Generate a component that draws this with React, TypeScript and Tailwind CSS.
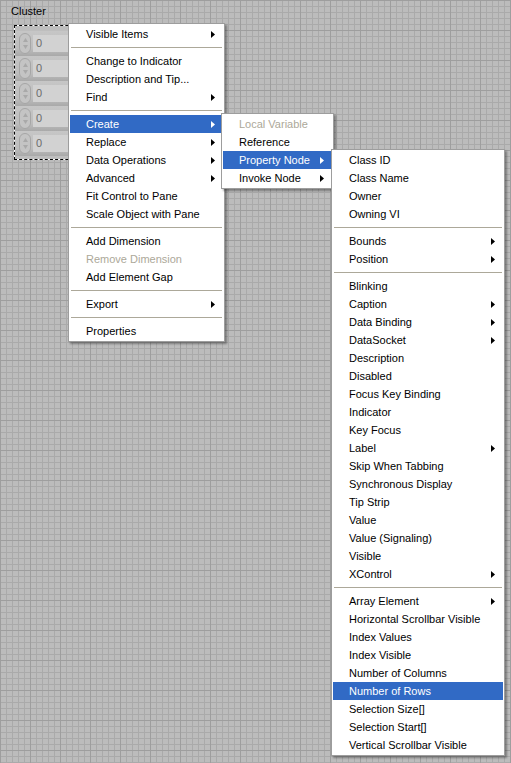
import React from 'react';

type Item = { label: string; sub?: boolean; disabled?: boolean; active?: boolean } | 'sep';

const mainMenu: Item[] = [
  { label: 'Visible Items', sub: true },
  'sep',
  { label: 'Change to Indicator' },
  { label: 'Description and Tip...' },
  { label: 'Find', sub: true },
  'sep',
  { label: 'Create', sub: true, active: true },
  { label: 'Replace', sub: true },
  { label: 'Data Operations', sub: true },
  { label: 'Advanced', sub: true },
  { label: 'Fit Control to Pane' },
  { label: 'Scale Object with Pane' },
  'sep',
  { label: 'Add Dimension' },
  { label: 'Remove Dimension', disabled: true },
  { label: 'Add Element Gap' },
  'sep',
  { label: 'Export', sub: true },
  'sep',
  { label: 'Properties' },
];

const createMenu: Item[] = [
  { label: 'Local Variable', disabled: true },
  { label: 'Reference' },
  { label: 'Property Node', sub: true, active: true },
  { label: 'Invoke Node', sub: true },
];

const propertyMenu: Item[] = [
  { label: 'Class ID' },
  { label: 'Class Name' },
  { label: 'Owner' },
  { label: 'Owning VI' },
  'sep',
  { label: 'Bounds', sub: true },
  { label: 'Position', sub: true },
  'sep',
  { label: 'Blinking' },
  { label: 'Caption', sub: true },
  { label: 'Data Binding', sub: true },
  { label: 'DataSocket', sub: true },
  { label: 'Description' },
  { label: 'Disabled' },
  { label: 'Focus Key Binding' },
  { label: 'Indicator' },
  { label: 'Key Focus' },
  { label: 'Label', sub: true },
  { label: 'Skip When Tabbing' },
  { label: 'Synchronous Display' },
  { label: 'Tip Strip' },
  { label: 'Value' },
  { label: 'Value (Signaling)' },
  { label: 'Visible' },
  { label: 'XControl', sub: true },
  'sep',
  { label: 'Array Element', sub: true },
  { label: 'Horizontal Scrollbar Visible' },
  { label: 'Index Values' },
  { label: 'Index Visible' },
  { label: 'Number of Columns' },
  { label: 'Number of Rows', active: true },
  { label: 'Selection Size[]' },
  { label: 'Selection Start[]' },
  { label: 'Vertical Scrollbar Visible' },
];

const Arrow = ({ white }: { white?: boolean }) => (
  <svg width="4" height="7" viewBox="0 0 4 7" className="shrink-0">
    <polygon points="0,0 4,3.5 0,7" fill={white ? '#ffffff' : '#000000'} />
  </svg>
);

const Menu = ({ items, className }: { items: Item[]; className: string }) => (
  <div
    className={`absolute bg-white border border-[#9d9d9d] p-px shadow-[2px_2px_2px_rgba(0,0,0,0.35)] ${className}`}
  >
    {items.map((item, i) =>
      item === 'sep' ? (
        <div key={i} className="h-[9px] flex items-center px-px">
          <div className="h-px w-full bg-[#aca899]" />
        </div>
      ) : (
        <div
          key={i}
          className={`h-[18px] flex items-center justify-between pl-[16px] pr-[8px] leading-[18px] whitespace-nowrap ${
            item.active ? 'bg-[#316ac5] text-white' : item.disabled ? 'text-[#aca899]' : 'text-black'
          }`}
        >
          <span>{item.label}</span>
          {item.sub && <Arrow white={item.active} />}
        </div>
      )
    )}
  </div>
);

const Spinner = () => (
  <div className="w-[12px] h-[21px] rounded-full bg-[#c4c4c4] border border-[#a6a6a6] flex flex-col items-center justify-center gap-[3px]">
    <svg width="5" height="4" viewBox="0 0 5 4">
      <polygon points="2.5,0 5,4 0,4" fill="#a9a9a9" />
    </svg>
    <svg width="5" height="4" viewBox="0 0 5 4">
      <polygon points="0,0 5,0 2.5,4" fill="#a9a9a9" />
    </svg>
  </div>
);

const NumericRow = () => (
  <div className="h-[25px] flex items-center gap-[2px] pl-[4px] bg-[linear-gradient(to_bottom,#c6c6c6,#bdbdbd_70%,#a9a9a9)]">
    <Spinner />
    <div className="h-[17px] flex-1 bg-[#d2d2d2] pl-[3px] text-[#6b6b6b] leading-[17px]">0</div>
  </div>
);

export default function App() {
  return (
    <div className="relative w-[511px] h-[763px] overflow-hidden font-['Liberation_Sans',Arial,sans-serif] text-[11px] bg-[#bcbcbc] bg-[linear-gradient(to_right,#9e9e9e_1px,transparent_1px),linear-gradient(to_bottom,#9e9e9e_1px,transparent_1px),linear-gradient(to_right,#aaaaaa_1px,transparent_1px),linear-gradient(to_bottom,#aaaaaa_1px,transparent_1px)] bg-[length:30px_30px,30px_30px,6px_6px,6px_6px]">
      {/* Front panel cluster */}
      <div className="pt-[4px] pl-[11px] leading-[14px] text-black">Cluster</div>
      <div className="ml-[14px] mt-[7px] w-[80px] h-[135px] bg-white border border-dashed border-black">
        <div className="h-full bg-[#bebebe] pt-[5px]">
          <NumericRow />
          <NumericRow />
          <NumericRow />
          <NumericRow />
          <NumericRow />
        </div>
      </div>

      {/* Shortcut menus */}
      <Menu items={mainMenu} className="left-[68px] top-[23px] w-[157px]" />
      <Menu items={createMenu} className="left-[221px] top-[113px] w-[113px]" />
      <Menu items={propertyMenu} className="left-[331px] top-[149px] w-[174px]" />
    </div>
  );
}
